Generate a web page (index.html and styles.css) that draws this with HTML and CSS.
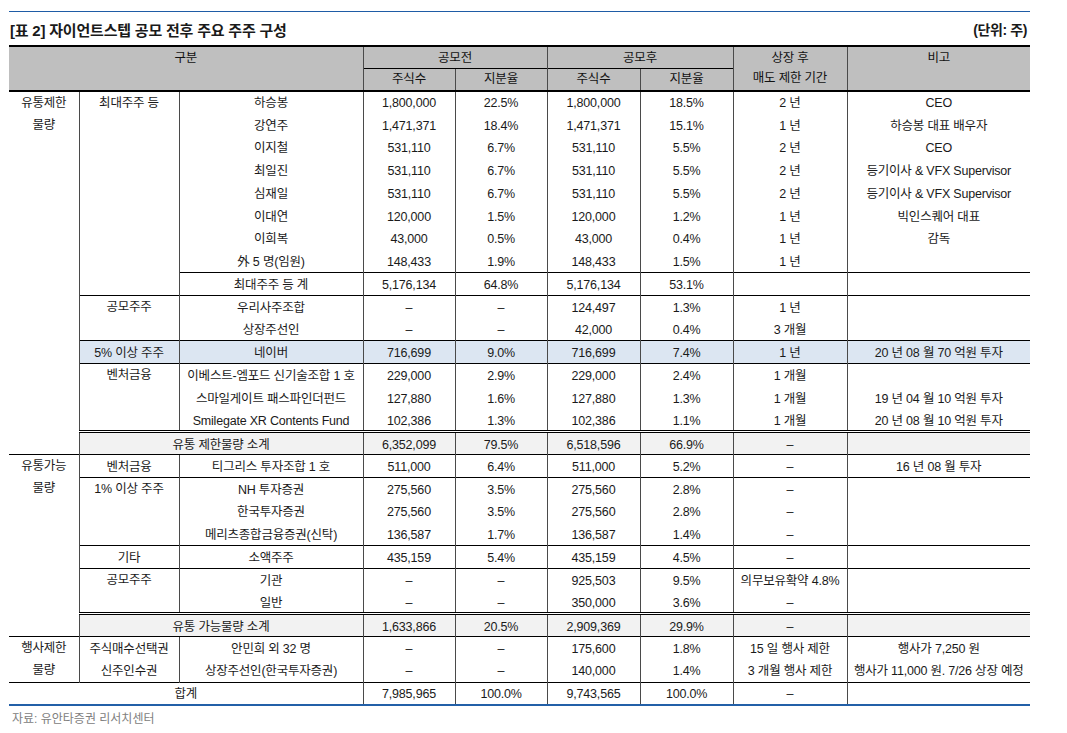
FILE: index.html
```html
<!DOCTYPE html>
<html lang="ko">
<head>
<meta charset="utf-8">
<title>자이언트스텝 공모 전후 주요 주주 구성</title>
<link rel="stylesheet" href="styles.css">
</head>
<body>
<div class="page">
  <div class="head">
    <div class="title">[표 2] 자이언트스텝 공모 전후 주요 주주 구성</div>
    <div class="unit">(단위: 주)</div>
  </div>
  <table class="tbl">
    <colgroup>
      <col class="w1"><col class="w2"><col class="w3"><col class="w4"><col class="w5"><col class="w6"><col class="w7"><col class="w8"><col class="w9">
    </colgroup>
    <thead>
      <tr class="h1">
        <th class="c1" colspan="3" rowspan="2">구분</th>
        <th colspan="2">공모전</th>
        <th colspan="2">공모후</th>
        <th rowspan="2">상장 후<br>매도 제한 기간</th>
        <th rowspan="2">비고</th>
      </tr>
      <tr class="h2">
        <th>주식수</th><th>지분율</th><th>주식수</th><th>지분율</th>
      </tr>
    </thead>
    <tbody>
      <tr class="first">
        <td class="c1 g" rowspan="16">유통제한<br>물량</td>
        <td class="g" rowspan="9">최대주주 등</td>
        <td>하승봉</td><td>1,800,000</td><td>22.5%</td><td>1,800,000</td><td>18.5%</td><td>2 년</td><td>CEO</td>
      </tr>
      <tr><td>강연주</td><td>1,471,371</td><td>18.4%</td><td>1,471,371</td><td>15.1%</td><td>1 년</td><td>하승봉 대표 배우자</td></tr>
      <tr><td>이지철</td><td>531,110</td><td>6.7%</td><td>531,110</td><td>5.5%</td><td>2 년</td><td>CEO</td></tr>
      <tr><td>최일진</td><td>531,110</td><td>6.7%</td><td>531,110</td><td>5.5%</td><td>2 년</td><td>등기이사 &amp; VFX Supervisor</td></tr>
      <tr><td>심재일</td><td>531,110</td><td>6.7%</td><td>531,110</td><td>5.5%</td><td>2 년</td><td>등기이사 &amp; VFX Supervisor</td></tr>
      <tr><td>이대연</td><td>120,000</td><td>1.5%</td><td>120,000</td><td>1.2%</td><td>1 년</td><td>빅인스퀘어 대표</td></tr>
      <tr><td>이희복</td><td>43,000</td><td>0.5%</td><td>43,000</td><td>0.4%</td><td>1 년</td><td>감독</td></tr>
      <tr><td>外 5 명(임원)</td><td>148,433</td><td>1.9%</td><td>148,433</td><td>1.5%</td><td>1 년</td><td></td></tr>
      <tr class="s"><td>최대주주 등 계</td><td>5,176,134</td><td>64.8%</td><td>5,176,134</td><td>53.1%</td><td></td><td></td></tr>
      <tr class="s">
        <td class="g" rowspan="2">공모주주</td>
        <td>우리사주조합</td><td>–</td><td>–</td><td>124,497</td><td>1.3%</td><td>1 년</td><td></td>
      </tr>
      <tr><td>상장주선인</td><td>–</td><td>–</td><td>42,000</td><td>0.4%</td><td>3 개월</td><td></td></tr>
      <tr class="s blue"><td>5% 이상 주주</td><td>네이버</td><td>716,699</td><td>9.0%</td><td>716,699</td><td>7.4%</td><td>1 년</td><td>20 년 08 월 70 억원 투자</td></tr>
      <tr class="s">
        <td class="g" rowspan="3">벤처금융</td>
        <td>이베스트-엠포드 신기술조합 1 호</td><td>229,000</td><td>2.9%</td><td>229,000</td><td>2.4%</td><td>1 개월</td><td></td>
      </tr>
      <tr><td>스마일게이트 패스파인더펀드</td><td>127,880</td><td>1.6%</td><td>127,880</td><td>1.3%</td><td>1 개월</td><td>19 년 04 월 10 억원 투자</td></tr>
      <tr><td>Smilegate XR Contents Fund</td><td>102,386</td><td>1.3%</td><td>102,386</td><td>1.1%</td><td>1 개월</td><td>20 년 08 월 10 억원 투자</td></tr>
      <tr class="d sub"><td colspan="2">유통 제한물량 소계</td><td>6,352,099</td><td>79.5%</td><td>6,518,596</td><td>66.9%</td><td>–</td><td></td></tr>

      <tr class="s">
        <td class="c1 g" rowspan="8">유통가능<br>물량</td>
        <td>벤처금융</td><td>티그리스 투자조합 1 호</td><td>511,000</td><td>6.4%</td><td>511,000</td><td>5.2%</td><td>–</td><td>16 년 08 월 투자</td>
      </tr>
      <tr class="s">
        <td class="g" rowspan="3">1% 이상 주주</td>
        <td>NH 투자증권</td><td>275,560</td><td>3.5%</td><td>275,560</td><td>2.8%</td><td>–</td><td></td>
      </tr>
      <tr><td>한국투자증권</td><td>275,560</td><td>3.5%</td><td>275,560</td><td>2.8%</td><td>–</td><td></td></tr>
      <tr><td>메리츠종합금융증권(신탁)</td><td>136,587</td><td>1.7%</td><td>136,587</td><td>1.4%</td><td>–</td><td></td></tr>
      <tr class="s"><td>기타</td><td>소액주주</td><td>435,159</td><td>5.4%</td><td>435,159</td><td>4.5%</td><td>–</td><td></td></tr>
      <tr class="s">
        <td class="g" rowspan="2">공모주주</td>
        <td>기관</td><td>–</td><td>–</td><td>925,503</td><td>9.5%</td><td>의무보유확약 4.8%</td><td></td>
      </tr>
      <tr><td>일반</td><td>–</td><td>–</td><td>350,000</td><td>3.6%</td><td>–</td><td></td></tr>
      <tr class="d sub"><td colspan="2">유통 가능물량 소계</td><td>1,633,866</td><td>20.5%</td><td>2,909,369</td><td>29.9%</td><td>–</td><td></td></tr>

      <tr class="s">
        <td class="c1 g" rowspan="2">행사제한<br>물량</td>
        <td>주식매수선택권</td><td>안민희 외 32 명</td><td>–</td><td>–</td><td>175,600</td><td>1.8%</td><td>15 일 행사 제한</td><td>행사가 7,250 원</td>
      </tr>
      <tr><td>신주인수권</td><td>상장주선인(한국투자증권)</td><td>–</td><td>–</td><td>140,000</td><td>1.4%</td><td>3 개월 행사 제한</td><td>행사가 11,000 원. 7/26 상장 예정</td></tr>
      <tr class="s total"><td class="c1" colspan="3">합계</td><td>7,985,965</td><td>100.0%</td><td>9,743,565</td><td>100.0%</td><td>–</td><td></td></tr>
    </tbody>
  </table>
  <div class="source">자료: 유안타증권 리서치센터</div>
</div>
</body>
</html>
```

FILE: styles.css
```css
html, body {
  margin: 0;
  padding: 0;
  background: #ffffff;
}

body {
  color: #1a1a1a;
  font-family: "Liberation Sans", "Noto Sans CJK KR", sans-serif;
}

.page {
  margin-left: 9px;
  width: 1021px;
  padding-top: 11px;
}

.head {
  border-top: 1px solid #1f5ca6;
  height: 34px;
  box-sizing: border-box;
  padding-top: 1px;
  display: flex;
  justify-content: space-between;
  align-items: center;
}

.title {
  font-size: 15px;
  font-weight: 700;
  letter-spacing: -0.2px;
  padding-left: 1px;
}

.unit {
  font-size: 14px;
  font-weight: 700;
  letter-spacing: -0.4px;
  padding-right: 3px;
}

.tbl {
  border-collapse: collapse;
  table-layout: fixed;
  width: 1021px;
  font-size: 12.5px;
  letter-spacing: -0.2px;
}

.w1 { width: 70px; }
.w2 { width: 100px; }
.w3 { width: 184px; }
.w4 { width: 92px; }
.w5 { width: 92px; }
.w6 { width: 93px; }
.w7 { width: 93px; }
.w8 { width: 114px; }
.w9 { width: 183px; }

.tbl th,
.tbl td {
  padding: 0;
  text-align: center;
  white-space: nowrap;
  border-left: 1px solid #4a4a4a;
}

.tbl .c1 {
  border-left: none;
}

.tbl thead tr {
  height: 22px;
}

.tbl thead th {
  background: #bfbfbf;
  font-weight: normal;
  color: #111;
  vertical-align: top;
  line-height: 20px;
  padding-top: 1px;
  border-top: 2px solid #000;
}

.tbl thead .h2 th {
  border-top: 1px solid #000;
  padding-top: 0;
}

.tbl tbody tr {
  height: 22.75px;
}

.tbl td {
  line-height: 18px;
  padding-top: 2px;
  vertical-align: middle;
}

.tbl td.g {
  vertical-align: top;
  line-height: 22px;
  padding-top: 0;
}

.tbl tbody .first td {
  border-top: 2px solid #000;
}

.tbl .s td {
  border-top: 1px solid #000;
}

.tbl .d td {
  border-top: 3px double #000;
}

.tbl .blue td {
  background: #dce6f2;
}

.tbl .sub td {
  background: #f2f2f2;
}

.tbl .total td {
  border-bottom: 2px solid #2360a8;
}

.source {
  margin-top: 5px;
  padding-left: 3px;
  font-size: 12px;
  line-height: 16px;
  color: #808080;
}
```
